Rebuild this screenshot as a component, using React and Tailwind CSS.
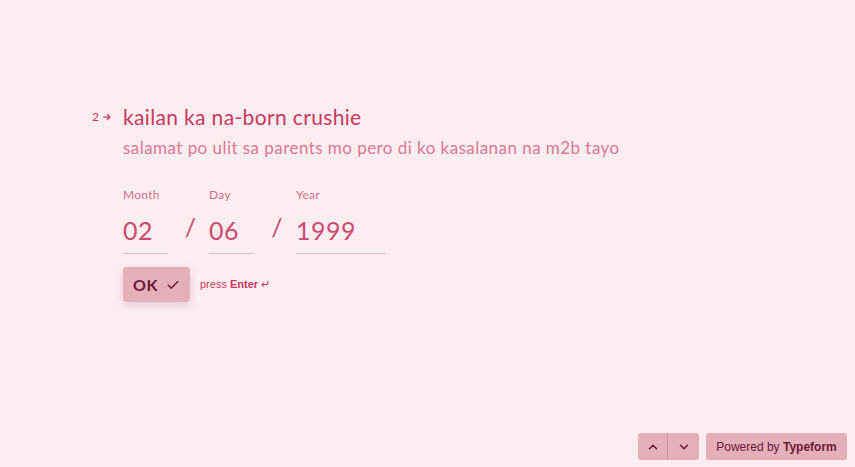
import React from 'react';

const Check = () => (
  <svg width="14" height="14" viewBox="0 0 24 24" fill="none" stroke="currentColor" strokeWidth="2.5" strokeLinecap="round" strokeLinejoin="round">
    <path d="M4 12.5l5 5L20 6.5" />
  </svg>
);

const Chevron = ({ up }) => (
  <svg width="14" height="14" viewBox="0 0 24 24" fill="none" stroke="currentColor" strokeWidth="2.5" strokeLinecap="round" strokeLinejoin="round">
    <path d={up ? 'M6 15l6-6 6 6' : 'M6 9l6 6 6-6'} />
  </svg>
);

const DateField = ({ label, value, width }) => (
  <div className="flex flex-col">
    <label className="text-[12px] leading-none text-[#d66d8a] tracking-[0.3px] mb-[14px]">{label}</label>
    <div className={`${width} border-b border-[#efb7c6] pb-[8px] text-[25px] leading-[30px] text-[#cf4a71] tracking-[0.5px]`}>{value}</div>
  </div>
);

export default function App() {
  return (
    <div className="w-[855px] h-[467px] bg-[#fbedf0] flex flex-col" style={{ fontFamily: 'Lato, "Open Sans", sans-serif' }}>
      <div className="flex pt-[103px] pl-[92px]">
        <div className="flex items-center gap-[3px] h-[28px] text-[#c9385f] text-[12px] w-[31px]">
          <span>2</span>
          <svg width="10" height="10" viewBox="0 0 24 24" fill="none" stroke="currentColor" strokeWidth="3" strokeLinecap="round" strokeLinejoin="round">
            <path d="M4 12h15M13 6l6 6-6 6" />
          </svg>
        </div>
        <div className="flex flex-col">
          <h1 className="text-[21px] leading-[28px] text-[#c9385f] tracking-[0.35px]">kailan ka na-born crushie</h1>
          <p className="mt-[6px] text-[17px] leading-[22px] text-[#df7894] tracking-[0.45px]">salamat po ulit sa parents mo pero di ko kasalanan na m2b tayo</p>

          <div className="flex items-end mt-[30px]">
            <DateField label="Month" value="02" width="w-[45px]" />
            <span className="w-[41px] text-center text-[25px] leading-[30px] text-[#cf4a71] pb-[12px] pl-[4px]">/</span>
            <DateField label="Day" value="06" width="w-[45px]" />
            <span className="w-[42px] text-center text-[25px] leading-[30px] text-[#cf4a71] pb-[12px] pl-[4px]">/</span>
            <DateField label="Year" value="1999" width="w-[90px]" />
          </div>

          <div className="flex items-center mt-[13px] gap-[10px]">
            <button className="w-[67px] h-[35px] rounded-[4px] bg-[#e4aebb] text-[#6b1a35] flex items-center justify-center gap-[8px] text-[16px] font-bold tracking-[0.5px] shadow-[0_3px_8px_rgba(120,30,60,0.18)]">
              OK <Check />
            </button>
            <span className="text-[11px] text-[#c9385f]" style={{ fontFamily: '"Liberation Sans", Arial, sans-serif' }}>
              press <b>Enter</b> ↵
            </span>
          </div>
        </div>
      </div>

      <div className="mt-auto mb-[7px] mr-[8px] flex justify-end gap-[7px]" style={{ fontFamily: '"Liberation Sans", Arial, sans-serif' }}>
        <div className="flex h-[27px] rounded-[3px] bg-[#e4aebb] text-[#6b1a35] overflow-hidden">
          <button className="w-[30px] flex items-center justify-center border-r border-[#d58ea0]"><Chevron up /></button>
          <button className="w-[31px] flex items-center justify-center"><Chevron /></button>
        </div>
        <div className="h-[27px] w-[141px] rounded-[3px] bg-[#e4aebb] text-[#6b1a35] text-[12px] flex items-center justify-center">
          Powered by&nbsp;<b>Typeform</b>
        </div>
      </div>
    </div>
  );
}
